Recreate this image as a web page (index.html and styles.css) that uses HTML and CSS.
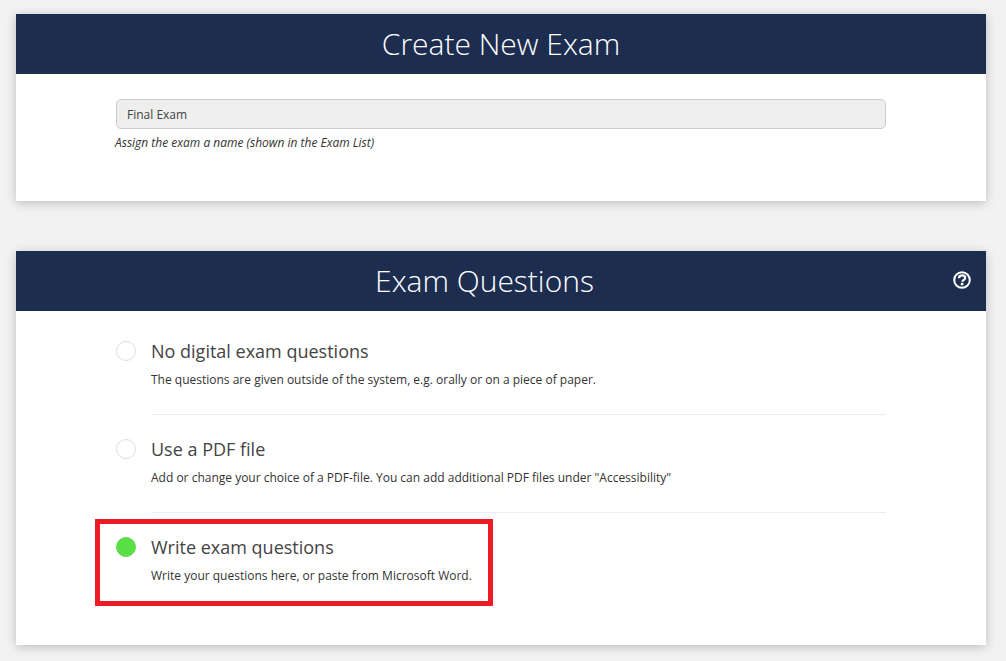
FILE: index.html
```html
<!DOCTYPE html>
<html lang="en">
<head>
<meta charset="utf-8">
<title>Create New Exam</title>
<link rel="stylesheet" href="styles.css">
</head>
<body>
<section class="card card-name">
  <header class="card-head"><h1 class="card-title">Create New Exam</h1></header>
  <div class="name-body">
    <input class="name-input" type="text" value="Final Exam" readonly>
    <p class="hint">Assign the exam a name (shown in the Exam List)</p>
  </div>
</section>
<section class="card">
  <header class="card-head">
    <h1 class="card-title">Exam Questions</h1>
    <svg class="help-icon" viewBox="0 0 18 18" aria-hidden="true">
      <circle cx="9" cy="9" r="7.8" fill="none" stroke="#fff" stroke-width="2"/>
      <path d="M5.9 7.2C6 5.3 7.4 4.3 9.1 4.3c1.8 0 3.1 1 3.1 2.5 0 1.2-.8 1.8-1.6 2.3-.7.4-1.1.8-1.1 1.7" fill="none" stroke="#fff" stroke-width="2.3"/>
      <rect x="7.8" y="11.8" width="2.6" height="2.5" fill="#fff"/>
    </svg>
  </header>
  <div class="options">
    <div class="option">
      <span class="radio"></span>
      <div class="option-text">
        <h2 class="option-title">No digital exam questions</h2>
        <p class="option-desc">The questions are given outside of the system, e.g. orally or on a piece of paper.</p>
      </div>
    </div>
    <div class="option">
      <span class="radio"></span>
      <div class="option-text">
        <h2 class="option-title">Use a PDF file</h2>
        <p class="option-desc">Add or change your choice of a PDF-file. You can add additional PDF files under "Accessibility"</p>
      </div>
    </div>
    <div class="option option-last">
      <span class="radio radio-on"></span>
      <div class="option-text">
        <h2 class="option-title">Write exam questions</h2>
        <p class="option-desc">Write your questions here, or paste from Microsoft Word.</p>
      </div>
      <div class="highlight"></div>
    </div>
  </div>
</section>
</body>
</html>
```

FILE: styles.css
```css
* { box-sizing: border-box; }

html, body { height: 661px; overflow: hidden; }

body {
  margin: 0;
  padding: 14px 20px 16px 16px;
  background: #f2f2f2;
  font-family: "Open Sans", "Liberation Sans", sans-serif;
  color: #333;
}

.card {
  background: #fff;
  box-shadow: 0 2px 10px rgba(0, 0, 0, 0.22);
}

.card-name { margin-bottom: 50px; }

.card-head {
  display: flex;
  align-items: center;
  height: 60px;
  padding-right: 15px;
  background: #1d2d50;
  color: #fff;
}

.card-name .card-head { padding-right: 0; }

.card-title {
  flex: 1;
  margin: 0;
  font-size: 30px;
  font-weight: 300;
  line-height: 60px;
  text-align: center;
}

.help-icon {
  width: 18px;
  height: 18px;
  margin-top: -2px;
}

.name-body { padding: 25px 100px 49px; }

.name-input {
  display: block;
  width: 100%;
  height: 30px;
  padding: 0 10px;
  border: 1px solid #ccc;
  border-radius: 5px;
  outline: none;
  background: #eee;
  color: #444;
  font: 400 12px "Open Sans", "Liberation Sans", sans-serif;
}

.hint {
  margin: 5px 0 0 -1px;
  font-size: 12px;
  font-style: italic;
  line-height: 18px;
  color: #333;
}

.options { padding: 6px 100px 35px; }

.option {
  position: relative;
  display: flex;
  gap: 15px;
  padding-top: 22px;
}

.radio {
  flex: none;
  width: 20px;
  height: 20px;
  margin-top: 2px;
  border: 1px solid #ddd;
  border-radius: 50%;
  background: #fff;
}

.radio-on {
  border-color: #5bdf47;
  background: #5bdf47;
}

.option-text {
  flex: 1;
  padding-bottom: 25px;
  border-bottom: 1px solid #eee;
}

.option-last .option-text { border-bottom: 0; }

.option-title {
  margin: 0 0 8px;
  font-size: 18px;
  font-weight: 400;
  line-height: 24px;
  color: #444;
}

.option-desc {
  margin: 0;
  font-size: 12px;
  line-height: 18px;
  color: #333;
}

.highlight {
  position: absolute;
  left: -21px;
  top: 6px;
  width: 398px;
  height: 87px;
  border: 5px solid #ed1c24;
  pointer-events: none;
}
```
